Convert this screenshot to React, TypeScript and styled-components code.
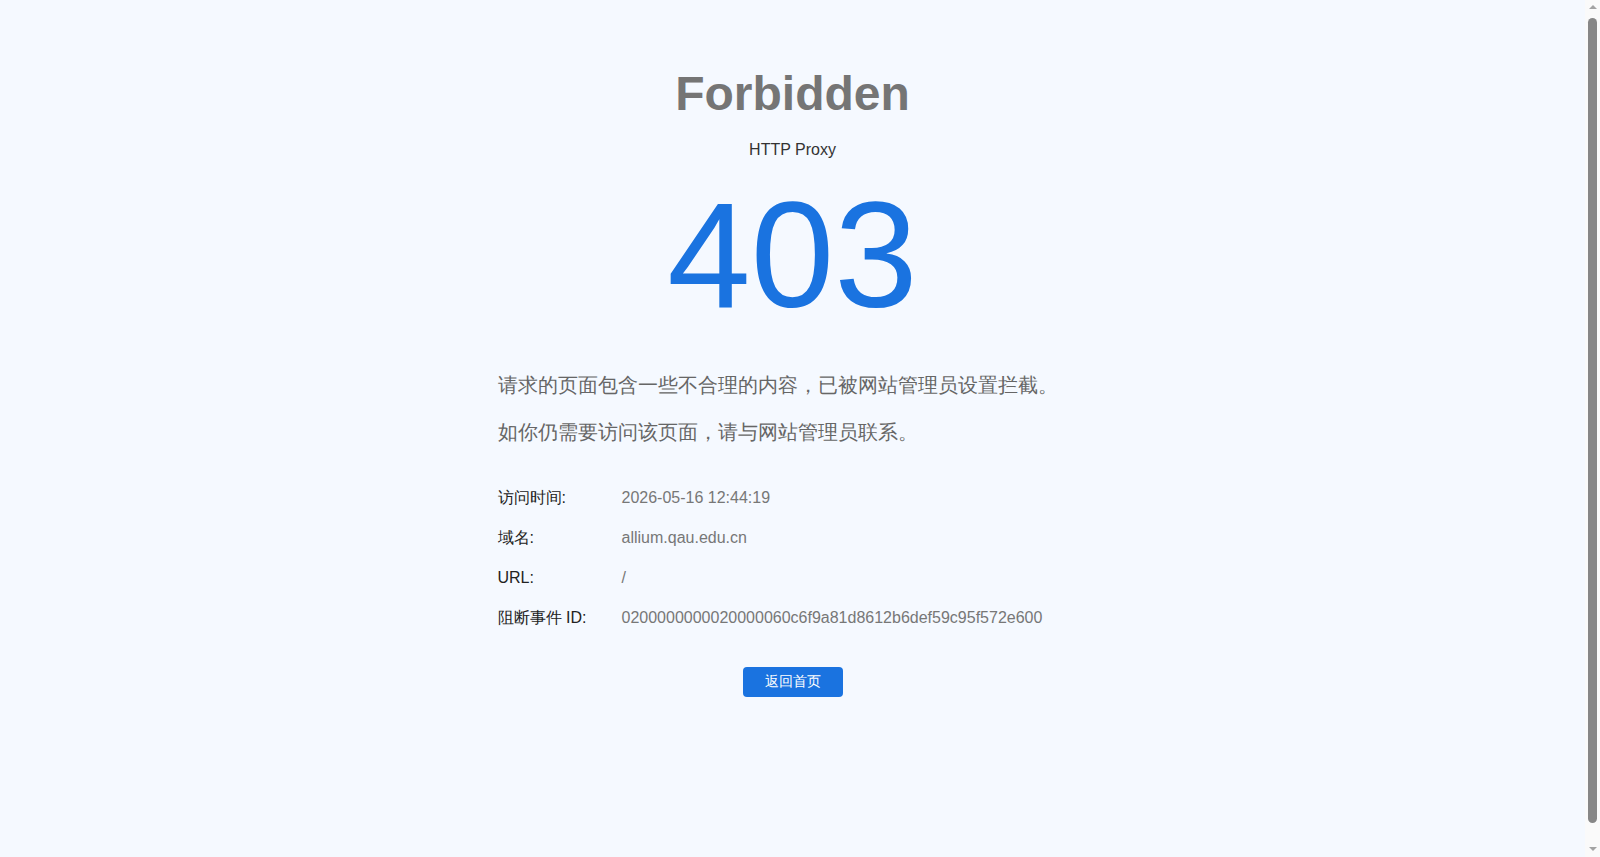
import React from "react";
import styled, { createGlobalStyle } from "styled-components";

const GlobalStyle = createGlobalStyle`
  html, body {
    background-color: #f5f9ff;
  }
  body {
    margin: 8px 23px 8px 8px;
    font-family: "Liberation Sans", Arial, sans-serif;
  }
`;

const Page = styled.div`
  min-height: 100vh;
  box-sizing: border-box;
  padding-top: 58px;
`;

const Container = styled.div`
  width: 590px;
  margin: 0 auto;
  display: flex;
  flex-direction: column;
`;

const Title = styled.h1`
  margin: 0;
  text-align: center;
  font-size: 48px;
  font-weight: bold;
  color: #757575;
  line-height: 55px;
`;

const Subtitle = styled.div`
  margin-top: 20px;
  text-align: center;
  font-size: 16px;
  line-height: 18px;
  color: #333;
`;

const Code = styled.div`
  margin-top: 21px;
  text-align: center;
  font-size: 150px;
  line-height: 150px;
  color: #1a73e0;
`;

const Message = styled.p`
  margin: 0;
  font-size: 20px;
  line-height: 28px;
  color: #666;
  & + & {
    margin-top: 19px;
  }
`;

const Messages = styled.div`
  margin-top: 41px;
`;

const InfoList = styled.div`
  margin-top: 32px;
  display: flex;
  flex-direction: column;
`;

const InfoRow = styled.div`
  display: grid;
  grid-template-columns: 124px 1fr;
  height: 40px;
  align-items: center;
  font-size: 16px;
`;

const Label = styled.span`
  color: #222;
`;

const Value = styled.span`
  color: #777;
`;

const Actions = styled.div`
  margin-top: 29px;
  display: flex;
  justify-content: center;
`;

const HomeButton = styled.a`
  display: inline-flex;
  align-items: center;
  justify-content: center;
  width: 100px;
  height: 30px;
  border-radius: 4px;
  background-color: #1a73e0;
  color: #fff;
  font-size: 14px;
  text-decoration: none;
  cursor: pointer;
`;

// the browser's scrollbar, drawn since the headless page hides its own
const ScrollTrack = styled.div`
  position: fixed;
  top: 0;
  right: 0;
  width: 15px;
  height: 100vh;
  background: #fafafa;
  display: flex;
  flex-direction: column;
  align-items: center;
`;

const ScrollArrow = styled.div<{ $down?: boolean }>`
  width: 0;
  height: 0;
  margin: ${(p) => (p.$down ? "auto 0 6px" : "5px 0 0")};
  border-left: 4px solid transparent;
  border-right: 4px solid transparent;
  ${(p) =>
    p.$down ? "border-top: 4px solid #a3a3a3;" : "border-bottom: 4px solid #a3a3a3;"}
`;

const ScrollThumb = styled.div`
  width: 9px;
  height: 805px;
  margin-top: 9px;
  border-radius: 5px;
  background: #878787;
`;

const rows = [
  { label: "访问时间:", value: "2026-05-16 12:44:19" },
  { label: "域名:", value: "allium.qau.edu.cn" },
  { label: "URL:", value: "/" },
  { label: "阻断事件 ID:", value: "0200000000020000060c6f9a81d8612b6def59c95f572e600" },
];

const App = () => {
  return (
    <>
      <GlobalStyle />
      <Page>
        <Container>
          <Title>Forbidden</Title>
          <Subtitle>HTTP Proxy</Subtitle>
          <Code>403</Code>
          <Messages>
            <Message>请求的页面包含一些不合理的内容，已被网站管理员设置拦截。</Message>
            <Message>如你仍需要访问该页面，请与网站管理员联系。</Message>
          </Messages>
          <InfoList>
            {rows.map((r) => (
              <InfoRow key={r.label}>
                <Label>{r.label}</Label>
                <Value>{r.value}</Value>
              </InfoRow>
            ))}
          </InfoList>
          <Actions>
            <HomeButton href="/">返回首页</HomeButton>
          </Actions>
        </Container>
      </Page>
      <ScrollTrack>
        <ScrollArrow />
        <ScrollThumb />
        <ScrollArrow $down />
      </ScrollTrack>
    </>
  );
};

export default App;
